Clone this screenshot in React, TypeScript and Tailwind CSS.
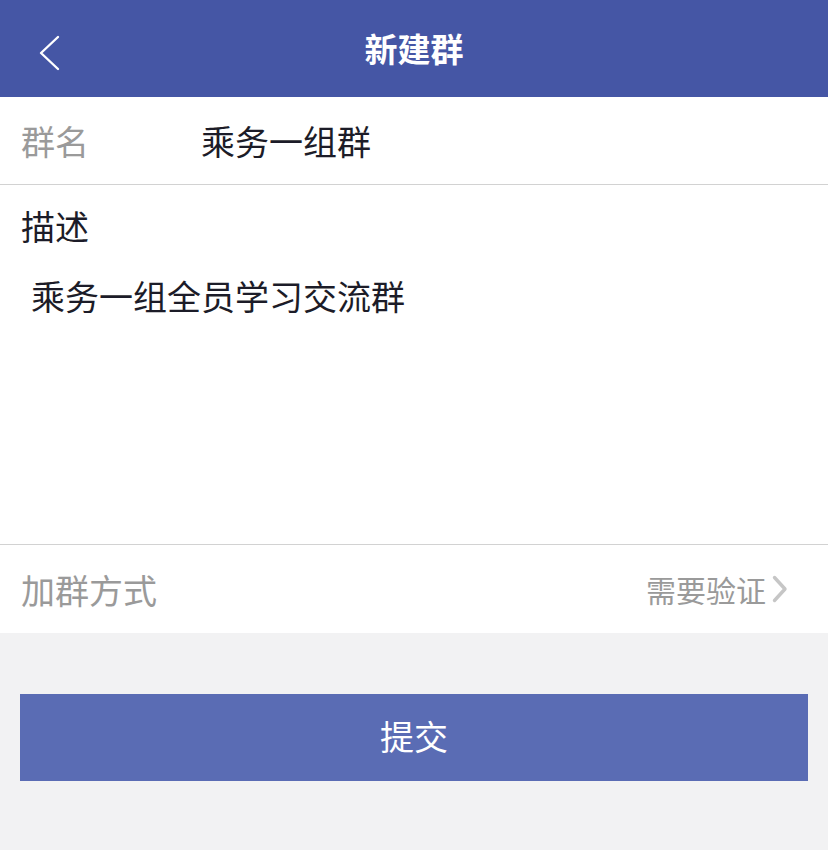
const font = { fontFamily: '"Noto Sans CJK SC", "Noto Sans", sans-serif' };

export default function App() {
    return (
        <div className="w-[828px] h-[850px] bg-[#f2f2f3] flex flex-col" style={font}>
            {/* header */}
            <div className="h-[97px] bg-[#4556a5] flex items-center relative">
                <svg className="absolute left-[38px] top-[35px]" width="24" height="36" viewBox="0 0 24 36" fill="none">
                    <path d="M20 2 L3 18 L20 34" stroke="white" strokeWidth="2.4" strokeLinecap="round" strokeLinejoin="round" />
                </svg>
                <div className="flex-1 text-center text-white text-[33px] font-bold leading-none">新建群</div>
            </div>

            {/* group name */}
            <div className="h-[88px] bg-white border-b border-[#d2d2d2] flex items-center px-[21px] text-[34px]">
                <span className="w-[180px] text-[#9a9a9a]">群名</span>
                <span className="text-[#1c1c28]">乘务一组群</span>
            </div>

            {/* description */}
            <div className="h-[360px] bg-white border-b border-[#d2d2d2] flex flex-col px-[21px]">
                <span className="text-[34px] text-[#1c1c28] leading-none mt-[24px]">描述</span>
                <span className="text-[34px] text-[#1c1c28] leading-none mt-[36px] ml-[10px]">乘务一组全员学习交流群</span>
            </div>

            {/* join method */}
            <div className="h-[88px] bg-white flex items-center justify-between pl-[21px] pr-[40px] text-[34px]">
                <span className="text-[#9a9a9a]">加群方式</span>
                <div className="flex items-center gap-[6px] text-[30px] text-[#9a9a9a]">
                    需要验证
                    <svg width="16" height="28" viewBox="0 0 16 28" fill="none">
                        <path d="M2.5 2.5 L13 14 L2.5 25.5" stroke="#c6c6c6" strokeWidth="3.4" strokeLinecap="round" strokeLinejoin="round" />
                    </svg>
                </div>
            </div>

            {/* submit */}
            <div className="px-[20px] mt-[61px]">
                <button className="w-full h-[87px] bg-[#5a6cb4] text-white text-[34px] leading-none flex items-center justify-center pb-[4px]">
                    提交
                </button>
            </div>
        </div>
    );
}
